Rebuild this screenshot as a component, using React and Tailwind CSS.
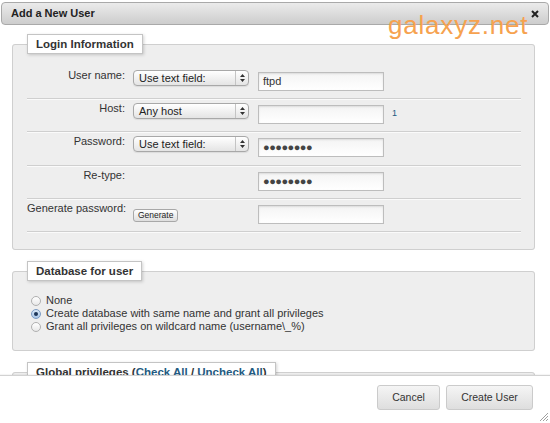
import React from 'react';

// "Add a New User" dialog (phpMyAdmin style)

const font = "font-['Liberation_Sans',Arial,sans-serif]";

function Select({ value }) {
    return (
        <div className="mt-[2px] flex h-[16px] w-[116px] items-stretch overflow-hidden rounded-[4px] border border-[#a8a8a8] bg-gradient-to-b from-white to-[#e4e4e4] shadow-[0_1px_1px_rgba(0,0,0,0.08)]">
            <span className="flex-1 pl-[5px] text-[11px] leading-[14px] text-[#222]">{value}</span>
            <span className="flex w-[13px] items-center justify-center border-l border-[#c4c4c4]">
                <svg width="5" height="8" viewBox="0 0 5 8">
                    <path d="M2.5 0 L5 3 H0 Z M2.5 8 L5 5 H0 Z" fill="#333" />
                </svg>
            </span>
        </div>
    );
}

function Field({ value, password }) {
    return (
        <div className="mt-[4px] flex h-[19px] w-[126px] items-center border border-[#bdbdbd] bg-gradient-to-b from-[#f4f4f4] to-white pl-[4px] shadow-[inset_0_1px_2px_rgba(0,0,0,0.1)]">
            {password ? (
                <span className="text-[11px] leading-none tracking-[-0.5px] text-[#444]">●●●●●●●●</span>
            ) : (
                <span className="text-[11px] leading-none text-[#333]">{value}</span>
            )}
        </div>
    );
}

function Row({ label, height, children, field, extra }) {
    return (
        <div className={`flex border-b border-[#cfcfcf] pt-[2px] shadow-[0_1px_0_#fafafa] ${height}`}>
            <div className="w-[100px] whitespace-nowrap pr-[2px] text-right text-[11px] leading-[14px] text-[#333]">{label}</div>
            <div className="w-[131px] pl-[6px]">{children}</div>
            {field}
            {extra}
        </div>
    );
}

function Legend({ children }) {
    return (
        <legend className="h-[20px] whitespace-nowrap border border-[#c4c4c4] bg-white px-[8px] text-[11.5px] font-bold leading-[18px] text-[#333] shadow-[1px_1px_3px_rgba(0,0,0,0.18)]">
            {children}
        </legend>
    );
}

function Radio({ checked, label }) {
    return (
        <div className="flex h-[13px] items-center">
            <span
                className={`ml-[4px] mr-[5px] flex h-[10px] w-[10px] items-center justify-center rounded-full border ${
                    checked ? 'border-[#7a9bc4] bg-gradient-to-b from-[#d9e8f7] to-[#a9c6e8]' : 'border-[#b0b0b0] bg-gradient-to-b from-white to-[#e8e8e8]'
                }`}
            >
                {checked && <span className="h-[4px] w-[4px] rounded-full bg-[#1d3557]" />}
            </span>
            <span className="text-[11px] leading-[13px] text-[#333]">{label}</span>
        </div>
    );
}

export default function App() {
    return (
        <div className={`relative h-[423px] w-[550px] overflow-hidden bg-white ${font}`}>
            {/* title bar */}
            <div className="mx-[1px] mt-[2px] flex h-[23px] items-center justify-between rounded-[4px] border border-[#a9a9a9] bg-gradient-to-b from-[#ebebeb] to-[#cdcdcd] pl-[9px] pr-[9px]">
                <span className="text-[11px] font-bold text-[#222]">Add a New User</span>
                <svg width="8" height="8" viewBox="0 0 8 8">
                    <path d="M1 1 L7 7 M7 1 L1 7" stroke="#222" strokeWidth="2" />
                </svg>
            </div>

            {/* watermark */}
            <div className="pointer-events-none absolute left-[388px] top-[12px] text-[26px] leading-[26px] tracking-[0.8px] text-[#f6a24f]">
                galaxyz.net
            </div>

            {/* content */}
            <div className="h-[350px] overflow-hidden pl-[12px] pr-[15px]">
                <fieldset className="mt-[9px] rounded-[3px] border border-[#cfcfcf] bg-[#eeeeee] pl-[14px] pr-[13px] pb-[17px]">
                    <Legend>Login Information</Legend>
                    <div className="pt-[12px]">
                        <Row label="User name:" height="h-[33px]" field={<Field value="ftpd" />}>
                            <Select value="Use text field:" />
                        </Row>
                        <Row
                            label="Host:"
                            height="h-[33px]"
                            field={<Field value="" />}
                            extra={<span className="ml-[8px] mt-[6px] text-[9px] text-[#235a81]">1</span>}
                        >
                            <Select value="Any host" />
                        </Row>
                        <Row label="Password:" height="h-[34px]" field={<Field password />}>
                            <Select value="Use text field:" />
                        </Row>
                        <Row label="Re-type:" height="h-[33px]" field={<Field password />} />
                        <Row label="Generate password:" height="h-[33px]" field={<Field value="" />}>
                            <button className="mt-[4px] h-[13px] rounded-[3px] border border-[#a8a8a8] bg-gradient-to-b from-white to-[#dedede] px-[4px] text-[8.5px] leading-[11px] text-[#222]">
                                Generate
                            </button>
                        </Row>
                    </div>
                </fieldset>

                <fieldset className="mt-[11px] rounded-[3px] border border-[#cfcfcf] bg-[#eeeeee] pl-[14px] pt-[13px] pb-[17px]">
                    <Legend>Database for user</Legend>
                    <Radio label="None" />
                    <Radio checked label="Create database with same name and grant all privileges" />
                    <Radio label="Grant all privileges on wildcard name (username\_%)" />
                </fieldset>

                <fieldset className="mt-[11px] h-[60px] rounded-[3px] border border-[#cfcfcf] bg-[#eeeeee] pl-[14px]">
                    <Legend>
                        Global privileges (<span className="text-[#235a81]">Check All</span> /{' '}
                        <span className="text-[#235a81]">Uncheck All</span>)
                    </Legend>
                </fieldset>
            </div>

            {/* footer */}
            <div className="flex h-[48px] justify-end gap-[6px] border-t border-[#d2d2d2] pr-[17px] pt-[9px] shadow-[0_-1px_1px_rgba(0,0,0,0.04)]">
                <button className="h-[25px] w-[63px] rounded-[3px] border border-[#cbcbcb] bg-gradient-to-b from-[#f5f5f5] to-[#dedede] text-[10.5px] text-[#333]">
                    Cancel
                </button>
                <button className="h-[25px] w-[87px] rounded-[3px] border border-[#cbcbcb] bg-gradient-to-b from-[#f5f5f5] to-[#dedede] text-[10.5px] text-[#333]">
                    Create User
                </button>
            </div>

            {/* resize grip */}
            <svg className="absolute bottom-[2px] right-[2px]" width="8" height="8" viewBox="0 0 8 8">
                <path d="M8 0 L0 8 M8 3 L3 8 M8 6 L6 8" stroke="#888" strokeWidth="0.8" />
            </svg>
        </div>
    );
}
